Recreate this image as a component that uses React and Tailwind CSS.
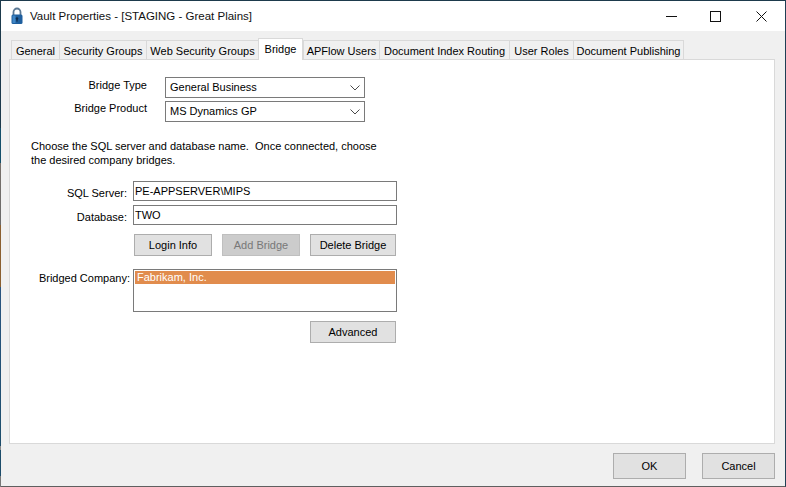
import React from "react";

function Chevron() {
  return (
    <svg width="10" height="6" viewBox="0 0 10 6" className="shrink-0">
      <path d="M0.5 0.5 L5 5 L9.5 0.5" fill="none" stroke="#4a4a4a" strokeWidth="1" />
    </svg>
  );
}

function Select({ value, className }) {
  return (
    <div className={"flex items-center justify-between w-[200px] h-[21px] border border-[#7a7a7a] bg-white pl-[4px] pr-[4px] " + (className || "")}>
      <span className="pb-[1px]">{value}</span>
      <Chevron />
    </div>
  );
}

function Input({ value, className }) {
  return (
    <div className={"flex items-center w-[264px] h-[20px] border border-[#7a7a7a] bg-white pl-[1px] pb-[1px] " + (className || "")}>
      {value}
    </div>
  );
}

function Btn({ children, className, disabled }) {
  return (
    <div
      className={
        "flex items-center justify-center border " +
        (disabled
          ? "bg-[#cccccc] border-[#bfbfbf] text-[#787878] "
          : "bg-[#e1e1e1] border-[#adadad] text-black ") +
        (className || "")
      }
    >
      {children}
    </div>
  );
}

function Tab({ label, w, active }) {
  return active ? (
    <div className="relative z-10 flex justify-center whitespace-nowrap h-[22px] bg-white border border-b-0 border-[#d9d9d9] pt-[3px] mb-[-1px]" style={{ width: w }}>
      {label}
    </div>
  ) : (
    <div className="flex justify-center whitespace-nowrap h-[19px] bg-[#f0f0f0] border border-b-0 border-[#d9d9d9] pt-[3px] mr-[-1px] last:mr-0" style={{ width: w }}>
      {label}
    </div>
  );
}

export default function App() {
  return (
    <div className="w-[786px] h-[487px] overflow-hidden flex bg-[#f0f0f0] text-[11px] leading-[14px] text-black font-['Liberation_Sans',Arial,sans-serif]">
      <div className="w-[1px] shrink-0 bg-[linear-gradient(to_bottom,#1d3a4c_0px,#1d3a4c_128px,#14506b_128px,#14506b_163px,#77706a_163px,#6a6a6a_225px,#8a5f30_225px,#8a5f30_287px,#2a5580_287px,#1f5070_420px,#1c4c6a_446px,#888888_446px,#888888_450px,#1c4c6a_450px,#1c4c6a_476px,#777777_476px,#777777_487px)]" />
      <div className="flex-1 min-w-0 flex flex-col border-t border-[#1d3a4c] border-b border-b-[#5f5f5f] border-r border-r-[#1f3f55]">
        <div className="h-[30px] shrink-0 bg-white flex items-center">
          <svg width="14" height="18" viewBox="0 0 14 18" className="ml-[9px] mr-[6px]">
            <path d="M3.5 8 V5 a3.5 3.5 0 0 1 7 0 V8" fill="none" stroke="#5a7894" strokeWidth="1.8" />
            <rect x="1.5" y="7.5" width="11" height="9.5" rx="1.5" fill="#1f5f9e" />
            <rect x="2.5" y="8.5" width="3" height="7.5" fill="#3f86c6" />
            <circle cx="7" cy="11.5" r="1.3" fill="#0d2c4d" />
            <rect x="6.4" y="12" width="1.2" height="2.6" fill="#0d2c4d" />
          </svg>
          <span className="text-[#111] text-[11.5px]">Vault Properties - [STAGING - Great Plains]</span>
          <div className="ml-auto flex items-center mr-[8px]">
            <svg width="11" height="11" viewBox="0 0 11 11" className="mr-[33px]"><path d="M0 5.5 H11" stroke="#111" strokeWidth="1" /></svg>
            <svg width="11" height="11" viewBox="0 0 11 11" className="mr-[35px]"><rect x="0.5" y="0.5" width="10" height="10" fill="none" stroke="#111" strokeWidth="1" /></svg>
            <svg width="11" height="11" viewBox="0 0 11 11" className="mr-[10px]"><path d="M0.5 0.5 L10.5 10.5 M10.5 0.5 L0.5 10.5" stroke="#111" strokeWidth="1" /></svg>
          </div>
        </div>

        <div className="flex-1 flex flex-col pl-[8px] pr-[9px] pt-[7px]">
          <div className="flex items-end h-[21px] pl-[2px]">
            <Tab label="General" w={49} />
            <Tab label="Security Groups" w={88} />
            <Tab label="Web Security Groups" w={113} />
            <Tab label="Bridge" w={45} active />
            <Tab label="APFlow Users" w={77} />
            <Tab label="Document Index Routing" w={131} />
            <Tab label="User Roles" w={65} />
            <Tab label="Document Publishing" w={111} />
          </div>

          <div className="w-[766px] h-[385px] bg-white border border-[#d9d9d9] pt-[17px] pl-[21px]">
            <div className="flex items-start">
              <div className="w-[116px] text-right pt-[1px]">Bridge Type</div>
              <Select value="General Business" className="ml-[18px]" />
            </div>
            <div className="flex items-start mt-[3px]">
              <div className="w-[116px] text-right">Bridge Product</div>
              <Select value="MS Dynamics GP" className="ml-[18px]" />
            </div>

            <p className="mt-[17px] whitespace-nowrap">
              Choose the SQL server and database name.&nbsp; Once connected, choose<br />the desired company bridges.
            </p>

            <div className="flex items-start mt-[14px]">
              <div className="w-[96px] text-right pt-[5px]">SQL Server:</div>
              <Input value="PE-APPSERVER\MIPS" className="ml-[6px]" />
            </div>
            <div className="flex items-start mt-[4px]">
              <div className="w-[96px] text-right pt-[5px]">Database:</div>
              <Input value="TWO" className="ml-[6px]" />
            </div>

            <div className="flex mt-[9px] ml-[103px] h-[22px]">
              <Btn className="w-[78px]">Login Info</Btn>
              <Btn className="w-[78px] ml-[10px]" disabled>Add Bridge</Btn>
              <Btn className="w-[86px] ml-[10px]">Delete Bridge</Btn>
            </div>

            <div className="flex items-start mt-[13px]">
              <div className="w-[99px] text-right pt-[2px]">Bridged Company:</div>
              <div className="ml-[3px] w-[264px] h-[43px] border border-[#7a7a7a] bg-white p-[1px]">
                <div className="h-[13px] bg-[#e18c4d] text-white leading-[13px] pl-[2px]">Fabrikam, Inc.</div>
              </div>
            </div>

            <Btn className="w-[86px] h-[22px] mt-[9px] ml-[279px]">Advanced</Btn>
          </div>

          <div className="flex justify-end mt-[9px] pr-[1px]">
            <Btn className="w-[73px] h-[26px]">OK</Btn>
            <Btn className="w-[73px] h-[26px] ml-[16px]">Cancel</Btn>
          </div>
        </div>
      </div>
    </div>
  );
}
